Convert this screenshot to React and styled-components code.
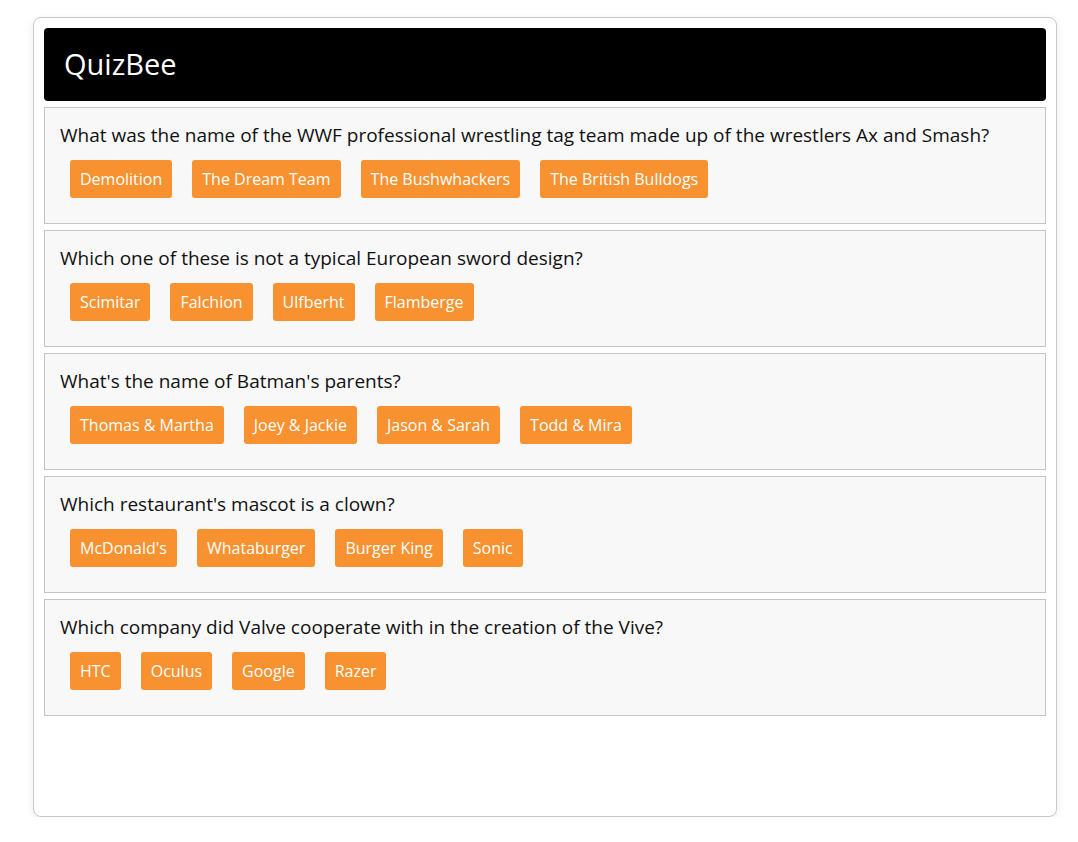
import React from 'react';
import styled, { createGlobalStyle } from 'styled-components';

const GlobalStyle = createGlobalStyle`
  body {
    margin: 0;
    background: #ffffff;
    font-family: "Open Sans", Lato, sans-serif;
  }
`;

const Page = styled.div`
  padding: 17px 21px 0 33px;
`;

const Card = styled.div`
  box-sizing: border-box;
  height: 800px;
  padding: 10px;
  background: #ffffff;
  border: 1px solid #c8c8c8;
  border-radius: 8px;
  box-shadow: 0 3px 10px rgba(0, 0, 0, 0.08);
`;

const Header = styled.header`
  height: 73px;
  display: flex;
  align-items: center;
  padding: 0 20px;
  background: #000000;
  border-radius: 4px;
  margin-bottom: 6px;

  h1 {
    margin: 0 0 3px;
    color: #ffffff;
    font-weight: 400;
    font-size: 29px;
  }
`;

const QuestionList = styled.div`
  display: flex;
  flex-direction: column;
  gap: 6px;
`;

const QuestionBox = styled.section`
  padding: 15px;
  background: #f8f8f8;
  border: 1px solid #c4c4c4;
`;

const QuestionText = styled.p`
  margin: 0 0 10px;
  font-size: 19px;
  line-height: 24px;
  padding-bottom: 3px;
  color: #111111;
`;

const Answers = styled.div`
  display: flex;
  gap: 20px;
  padding: 0 10px 10px;
`;

const AnswerButton = styled.button`
  height: 38px;
  padding: 0 10px;
  border: none;
  border-radius: 3px;
  background: #f8912f;
  color: #ffffff;
  font-family: inherit;
  font-size: 16px;
  cursor: pointer;
`;

const questions = [
  {
    text: 'What was the name of the WWF professional wrestling tag team made up of the wrestlers Ax and Smash?',
    answers: ['Demolition', 'The Dream Team', 'The Bushwhackers', 'The British Bulldogs'],
  },
  {
    text: 'Which one of these is not a typical European sword design?',
    answers: ['Scimitar', 'Falchion', 'Ulfberht', 'Flamberge'],
  },
  {
    text: "What's the name of Batman's parents?",
    answers: ['Thomas & Martha', 'Joey & Jackie', 'Jason & Sarah', 'Todd & Mira'],
  },
  {
    text: "Which restaurant's mascot is a clown?",
    answers: ["McDonald's", 'Whataburger', 'Burger King', 'Sonic'],
  },
  {
    text: 'Which company did Valve cooperate with in the creation of the Vive?',
    answers: ['HTC', 'Oculus', 'Google', 'Razer'],
  },
];

const App = () => (
  <>
    <GlobalStyle />
    <Page>
      <Card>
        <Header>
          <h1>QuizBee</h1>
        </Header>
        <QuestionList>
          {questions.map((q) => (
            <QuestionBox key={q.text}>
              <QuestionText>{q.text}</QuestionText>
              <Answers>
                {q.answers.map((a) => (
                  <AnswerButton key={a}>{a}</AnswerButton>
                ))}
              </Answers>
            </QuestionBox>
          ))}
        </QuestionList>
      </Card>
    </Page>
  </>
);

export default App;
